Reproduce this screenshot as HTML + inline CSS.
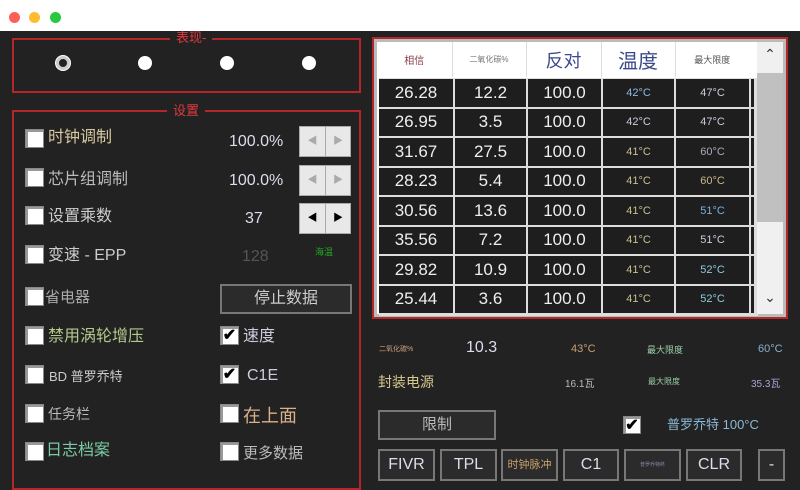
<!DOCTYPE html><html><head><meta charset="utf-8"><style>
*{margin:0;padding:0;box-sizing:border-box}
body{width:800px;height:479px;overflow:hidden;background:#222;font-family:"Liberation Sans","Noto Sans CJK SC",sans-serif;position:relative;color:#ddd}
.a{position:absolute}
.top{left:0;top:0;width:800px;height:31px;background:#fff}
.dot{width:11px;height:11px;border-radius:50%;top:12px}
.grp{border:2px solid #b3262a}
.gt{background:#222;color:#e0393e;font-size:13px;padding:0 6px;line-height:14px}
.rad{width:14px;height:14px;border-radius:50%;background:#fff}
.cb{width:19px;height:19px;background:#fff;border:1px solid #888;box-shadow:inset 2px 2px 0 #999}
.lbl{font-size:16px;line-height:20px}
.sp{width:52px;height:31px;background:#e8e8e8;border:1px solid #aaa}
.sp div{position:absolute;top:0;width:25px;height:29px;font-size:10px;color:#aaa;text-align:center;line-height:29px}
table{border-collapse:collapse}
.btn{background:#2b2b2b;border:2px solid #777;color:#bbb;text-align:center}
.chk{font-size:16px;color:#000;text-align:center;line-height:17px;font-weight:bold}
table.d td{background:#1e1e1e;height:27.5px;font-size:17px;padding:0}
table.d td:nth-child(1){width:74px}table.d td:nth-child(2){width:71px}table.d td:nth-child(3){width:73px}table.d td:nth-child(4){width:71px}table.d td:nth-child(5){width:73px}
table.d td.s{font-size:11px;color:#ccd}table.d td.e{width:3px}
table.h td{background:#fff}
</style></head><body>
<div class="a top"></div>
<div class="a dot" style="left:9px;background:#fd5f57"></div>
<div class="a dot" style="left:29px;background:#febc2e"></div>
<div class="a dot" style="left:50px;background:#28c840"></div>

<div class="a grp" style="left:12px;top:38px;width:349px;height:55px"></div>
<div class="a gt" style="left:170px;top:31px">表现-</div>
<div class="a rad" style="left:56px;top:56px;border:3px solid #ccc;background:#222;box-shadow:0 0 0 1px #fff"></div>
<div class="a rad" style="left:138px;top:56px"></div>
<div class="a rad" style="left:220px;top:56px"></div>
<div class="a rad" style="left:302px;top:56px"></div>

<div class="a grp" style="left:12px;top:110px;width:349px;height:380px"></div>
<div class="a gt" style="left:167px;top:104px">设置</div>

<div class="a cb" style="left:25px;top:129px"></div><div class="a lbl" style="left:48px;top:128px;color:#d8c8a0">时钟调制</div>
<div class="a lbl" style="left:229px;top:132px;color:#dde">100.0%</div>
<div class="a sp" style="left:299px;top:126px"><div style="left:0">◀</div><div style="left:25px;border-left:1px solid #aaa">▶</div></div>
<div class="a cb" style="left:25px;top:168px"></div><div class="a lbl" style="left:48px;top:170px;color:#bbb">芯片组调制</div>
<div class="a lbl" style="left:229px;top:171px;color:#dde">100.0%</div>
<div class="a sp" style="left:299px;top:165px"><div style="left:0">◀</div><div style="left:25px;border-left:1px solid #aaa">▶</div></div>
<div class="a cb" style="left:25px;top:206px"></div><div class="a lbl" style="left:48px;top:207px;color:#ccc">设置乘数</div>
<div class="a lbl" style="left:245px;top:209px;color:#dde">37</div>
<div class="a sp" style="left:299px;top:203px"><div style="left:0;color:#000">◀</div><div style="left:25px;border-left:1px solid #aaa;color:#000">▶</div></div>
<div class="a cb" style="left:25px;top:245px"></div><div class="a lbl" style="left:48px;top:246px;color:#ccc">变速 - EPP</div>
<div class="a lbl" style="left:242px;top:247px;color:#555">128</div>
<div class="a" style="left:315px;top:245px;font-size:9px;color:#2a2">海温</div>
<div class="a cb" style="left:25px;top:287px"></div><div class="a lbl" style="left:45px;top:288px;color:#aaa;font-size:15px">省电器</div>
<div class="a btn" style="left:220px;top:284px;width:132px;height:30px;font-size:16px;line-height:26px;color:#ccc">停止数据</div>
<div class="a cb" style="left:25px;top:326px"></div><div class="a lbl" style="left:48px;top:327px;color:#b5c98a">禁用涡轮增压</div>
<div class="a cb" style="left:220px;top:326px"><div class="chk">✔</div></div><div class="a lbl" style="left:243px;top:327px;color:#ccd">速度</div>
<div class="a cb" style="left:25px;top:365px"></div><div class="a" style="left:49px;top:366px;font-size:13px;color:#ccc">BD 普罗乔特</div>
<div class="a cb" style="left:220px;top:365px"><div class="chk">✔</div></div><div class="a lbl" style="left:247px;top:366px;color:#ccd">C1E</div>
<div class="a cb" style="left:25px;top:404px"></div><div class="a" style="left:48px;top:404px;font-size:14px;color:#bbb">任务栏</div>
<div class="a cb" style="left:220px;top:404px"></div><div class="a" style="left:243px;top:402px;font-size:18px;color:#d9b08a">在上面</div>
<div class="a cb" style="left:25px;top:442px"></div><div class="a lbl" style="left:46px;top:441px;color:#7ccaa8">日志档案</div>
<div class="a cb" style="left:220px;top:442px"></div><div class="a" style="left:243px;top:442px;font-size:15px;color:#bbb">更多数据</div>

<div class="a" style="left:372px;top:37px;width:416px;height:282px;border:2px solid #b3262a;background:#bbb;padding:3px">
<div style="position:absolute;left:3px;top:3px;width:406px;height:272px;background:#fff"></div>
<table class="a h" style="left:3px;top:3px;">
<tr style="height:35px;text-align:center">
<td style="width:75px;color:#8a3a4a;font-size:10px">相信</td>
<td style="width:74px;color:#777;font-size:8px;border-left:1px solid #ddd">二氧化碳%</td>
<td style="width:75px;color:#3d4a8a;font-size:18px;border-left:1px solid #ddd">反对</td>
<td style="width:74px;color:#3d4a8a;font-size:20px;border-left:1px solid #ddd">温度</td>
<td style="width:74px;color:#555;font-size:9px;border-left:1px solid #ddd">最大限度</td>
<td style="width:8px"></td></tr>
</table>
<div class="a" style="left:5px;top:39px;width:379px;height:238px;background:#ddd">
<table class="d" style="border-collapse:separate;border-spacing:2px 2px;margin:-1px -2px;text-align:center;color:#eee">
<tr><td>26.28</td><td>12.2</td><td>100.0</td><td class="s" style="color:#8fb8e0">42°C</td><td class="s">47°C</td><td class="e"></td></tr>
<tr><td>26.95</td><td>3.5</td><td>100.0</td><td class="s">42°C</td><td class="s">47°C</td><td class="e"></td></tr>
<tr><td>31.67</td><td>27.5</td><td>100.0</td><td class="s" style="color:#c8c090">41°C</td><td class="s" style="color:#aab">60°C</td><td class="e"></td></tr>
<tr><td>28.23</td><td>5.4</td><td>100.0</td><td class="s" style="color:#c8c090">41°C</td><td class="s" style="color:#c8b88a">60°C</td><td class="e"></td></tr>
<tr><td>30.56</td><td>13.6</td><td>100.0</td><td class="s" style="color:#c8c090">41°C</td><td class="s" style="color:#7ab0e0">51°C</td><td class="e"></td></tr>
<tr><td>35.56</td><td>7.2</td><td>100.0</td><td class="s" style="color:#c8c090">41°C</td><td class="s">51°C</td><td class="e"></td></tr>
<tr><td>29.82</td><td>10.9</td><td>100.0</td><td class="s" style="color:#c8c090">41°C</td><td class="s" style="color:#8fc8e0">52°C</td><td class="e"></td></tr>
<tr><td>25.44</td><td>3.6</td><td>100.0</td><td class="s" style="color:#c8c090">41°C</td><td class="s" style="color:#8fc8e0">52°C</td><td class="e"></td></tr>
</table></div>
<div class="a" style="left:383px;top:3px;width:26px;height:272px;background:#f0f0f0"></div>
<div class="a" style="left:383px;top:34px;width:26px;height:149px;background:#c0c0c0"></div>
<div class="a" style="left:383px;top:7px;width:26px;text-align:center;font-size:14px;color:#333">⌃</div>
<div class="a" style="left:383px;top:250px;width:26px;text-align:center;font-size:14px;color:#333">⌄</div>
</div>

<div class="a" style="left:379px;top:344px;font-size:7px;color:#c8a080">二氧化碳%</div>
<div class="a" style="left:466px;top:339px;font-size:16px;color:#dde">10.3</div>
<div class="a" style="left:571px;top:343px;font-size:11px;color:#c8a070">43°C</div>
<div class="a" style="left:647px;top:343px;font-size:9px;color:#9cd0a8">最大限度</div>
<div class="a" style="left:758px;top:343px;font-size:11px;color:#8ab0d0">60°C</div>
<div class="a" style="left:378px;top:372px;font-size:14px;color:#d8c890">封装电源</div>
<div class="a" style="left:565px;top:375px;font-size:10px;color:#bbb">16.1瓦</div>
<div class="a" style="left:648px;top:376px;font-size:8px;color:#9cd0a8">最大限度</div>
<div class="a" style="left:751px;top:375px;font-size:10px;color:#b0a0d0">35.3瓦</div>
<div class="a btn" style="left:378px;top:410px;width:118px;height:30px;font-size:15px;line-height:26px;color:#bbb">限制</div>
<div class="a cb" style="left:623px;top:416px;width:18px;height:18px"><div class="chk">✔</div></div>
<div class="a" style="left:667px;top:414px;font-size:13px;color:#8ab8d8">普罗乔特 100°C</div>

<div class="a btn" style="left:378px;top:449px;width:57px;height:32px;font-size:16px;line-height:28px;color:#dde">FIVR</div>
<div class="a btn" style="left:440px;top:449px;width:57px;height:32px;font-size:16px;line-height:28px;color:#dde">TPL</div>
<div class="a btn" style="left:501px;top:449px;width:57px;height:32px;font-size:11px;line-height:28px;color:#c8a070">时钟脉冲</div>
<div class="a btn" style="left:563px;top:449px;width:56px;height:32px;font-size:16px;line-height:28px;color:#dde">C1</div>
<div class="a btn" style="left:624px;top:449px;width:57px;height:32px;font-size:5px;line-height:28px;color:#88a">普罗乔特终</div>
<div class="a btn" style="left:686px;top:449px;width:56px;height:32px;font-size:16px;line-height:28px;color:#dde">CLR</div>
<div class="a btn" style="left:758px;top:449px;width:27px;height:32px;font-size:16px;line-height:28px;color:#dde">-</div>
</body></html>
